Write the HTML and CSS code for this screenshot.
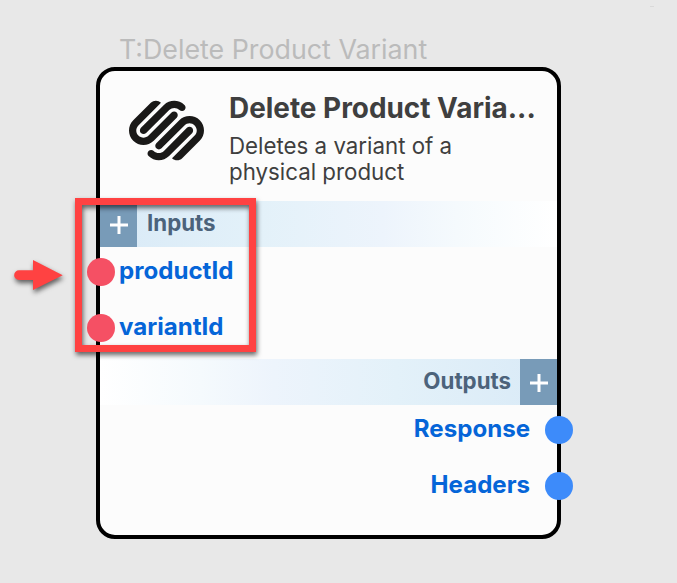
FILE: index.html
```html
<!DOCTYPE html>
<html lang="en">
<head>
<meta charset="utf-8">
<title>Delete Product Variant</title>
<link rel="stylesheet" href="styles.css">
</head>
<body>
<main class="canvas">
  <div class="caption"><span>T:Delete Product Variant</span></div>
  <section class="node">
    <header class="head">
      <svg class="logo" viewBox="0 0 24 24"><path d="M22.655 8.719c-1.802-1.801-4.726-1.801-6.564 0l-7.351 7.35c-.45.45-.45 1.2 0 1.65.45.449 1.2.449 1.65 0l7.351-7.351c.899-.899 2.362-.899 3.264 0 .9.9.9 2.364 0 3.264l-7.239 7.239c.9.899 2.362.899 3.263 0l5.589-5.589c1.836-1.838 1.836-4.763.037-6.563zm-2.475 2.437c-.451-.45-1.201-.45-1.65 0l-7.354 7.389c-.9.9-2.361.9-3.262 0-.45-.45-1.2-.45-1.65 0s-.45 1.2 0 1.65c1.801 1.8 4.726 1.8 6.564 0l7.351-7.35c.449-.487.449-1.239.001-1.689zm-2.439-7.35c-1.801-1.801-4.726-1.801-6.564 0l-7.351 7.351c-.45.449-.45 1.199 0 1.649s1.2.45 1.65 0l7.395-7.351c.9-.899 2.371-.899 3.271 0 .451.45 1.201.45 1.65 0 .421-.487.421-1.199-.029-1.649h-.022zm-2.475 2.437c-.45-.45-1.2-.45-1.65 0l-7.351 7.389c-.899.9-2.363.9-3.265 0-.9-.899-.9-2.363 0-3.264l7.239-7.239c-.9-.899-2.362-.899-3.263 0L1.35 8.719c-1.8 1.8-1.8 4.725 0 6.563 1.801 1.801 4.725 1.801 6.564 0l7.35-7.351c.451-.488.451-1.238 0-1.688h.002z"/></svg>
      <div class="about">
        <h1>Delete Product Varia...</h1>
        <p>Deletes a variant of a<br>physical product</p>
      </div>
    </header>
    <div class="band inputs">
      <span class="add"><svg viewBox="0 0 18 18"><path d="M9 0v18M0 9h18"/></svg></span>
      <h2>Inputs</h2>
    </div>
    <ul class="ports in">
      <li><i class="dot"></i><span>productId</span></li>
      <li><i class="dot"></i><span>variantId</span></li>
    </ul>
    <div class="band outputs">
      <h2>Outputs</h2>
      <span class="add"><svg viewBox="0 0 18 18"><path d="M9 0v18M0 9h18"/></svg></span>
    </div>
    <ul class="ports out">
      <li><span>Response</span><i class="dot"></i></li>
      <li><span>Headers</span><i class="dot"></i></li>
    </ul>
  </section>
  <div class="highlight"></div>
  <svg class="arrow" viewBox="0 0 50 32"><path d="M5 10.3H19V0L48.700 15.200 19 30V20H5A4.850 4.850 0 0 1 5 10.300z"/></svg>
  <i class="speck"></i>
</main>
</body>
</html>
```
FILE: styles.css
```css
* { box-sizing: border-box; }
body { margin: 0; background: #e8e8e8; font-family: Inter, "Liberation Sans", sans-serif; }
.canvas { position: relative; width: 677px; height: 583px; overflow: hidden; padding: 32px 0 0 96px; }
.caption { height: 35px; padding-left: 23px; font-size: 26.8px; line-height: 35px; color: #bbb; white-space: nowrap; }
.node { width: 465px; height: 472px; border: 4px solid #000; border-radius: 19px; background: #fcfcfc; }
.head { display: flex; height: 130px; padding-left: 28.6px; }
.logo { width: 75px; height: 75px; margin-top: 22.3px; fill: #1a1918; flex: none; }
.about { margin-left: 25.4px; color: #3f3f3f; white-space: nowrap; }
h1 { margin: 20px 0 0; font-size: 27.9px; line-height: 34px; font-weight: 700; }
p { margin: 8px 0 0; font-size: 22.3px; line-height: 26px; }
.band { display: flex; height: 46px; }
.inputs { background: linear-gradient(90deg, #d9eaf7, #e3f1f9 35%, #edf4fc 62%, #f5fafd 78%, #fff); }
.outputs { justify-content: flex-end; background: linear-gradient(270deg, #d9eaf7, #e3f1f9 35%, #edf4fc 62%, #f5fafd 78%, #fff); }
.add { display: flex; width: 37px; height: 46px; align-items: center; justify-content: center; background: #789bb8; }
.add svg { width: 18px; height: 18px; margin: 2px 0 0 1px; fill: none; stroke: #fff; stroke-width: 3px; }
h2 { margin: 0 9px 0 10px; font-size: 22.3px; line-height: 44px; font-weight: 700; color: #4c637b; }
.ports { height: 112px; margin: 0; padding: 0; list-style: none; font-size: 24.1px; font-weight: 700; color: #0565d8; }
.ports li { display: flex; align-items: center; height: 56px; padding-bottom: 10px; }
.dot { width: 28px; height: 28px; border-radius: 50%; flex: none; }
.in .dot { margin: 3px 4px 0 -13px; background: #f55064; }
.out li { justify-content: flex-end; }
.out .dot { margin: 3px -15.500px 0 14.500px; background: #3d8bfa; }
.highlight { position: absolute; left: 75px; top: 198px; width: 181px; height: 154px; border: 7px solid #ff4242; filter: drop-shadow(1px 3px 2.5px rgba(0,0,0,.6)); }
.arrow { position: absolute; left: 14px; top: 260px; width: 50px; height: 32px; overflow: visible; fill: #ff4242; filter: drop-shadow(1px 3px 2.5px rgba(0,0,0,.6)); }
.speck { position: absolute; left: 650px; top: 6px; width: 4px; height: 1px; background: #d9d9d9; }
```
